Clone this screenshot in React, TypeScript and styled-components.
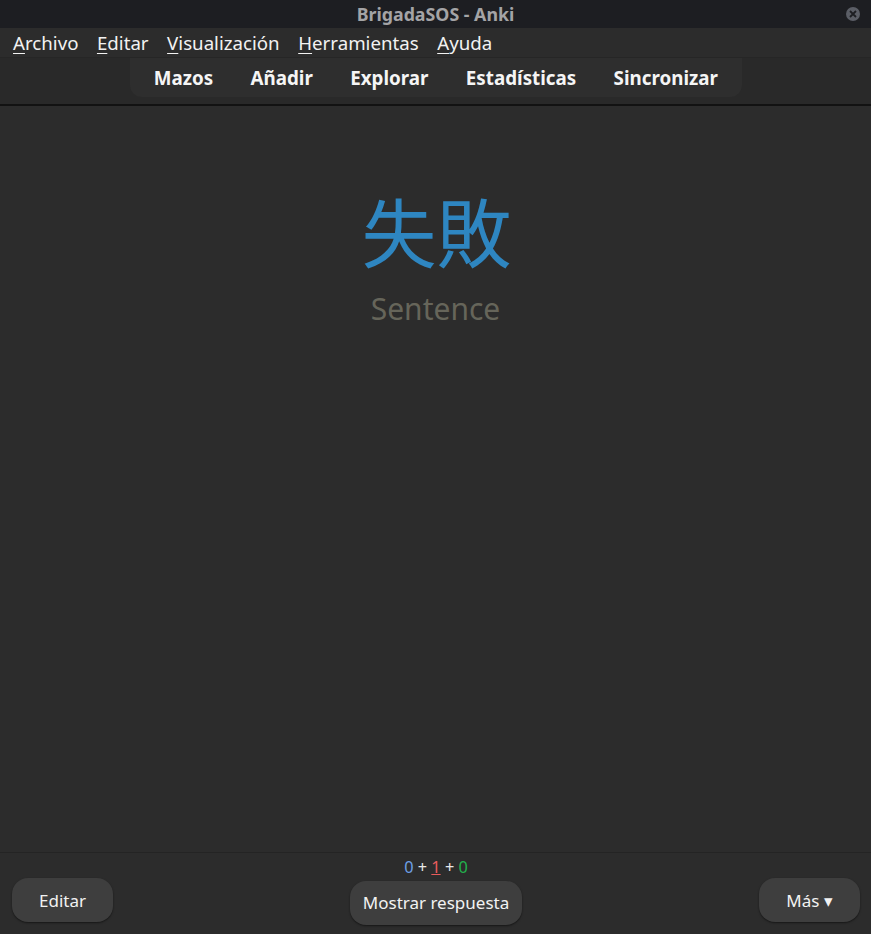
import styled, { createGlobalStyle } from "styled-components";

const GlobalStyle = createGlobalStyle`
  html, body {
    margin: 0;
    padding: 0;
    background: #2c2c2c;
    font-family: "Noto Sans", "Open Sans", sans-serif;
  }
`;

const Window = styled.div`
  width: 871px;
  height: 934px;
  display: flex;
  flex-direction: column;
  background: #2c2c2c;
  overflow: hidden;
`;

const TitleBar = styled.div`
  height: 28px;
  flex: 0 0 28px;
  background: #1d1e22;
  display: flex;
  align-items: center;
  justify-content: center;
  position: relative;
  color: #a4a4a6;
  font-weight: 700;
  font-size: 17.8px;
`;

const CloseBtn = styled.div`
  position: absolute;
  right: 11px;
  top: 7px;
  width: 14px;
  height: 14px;
  border-radius: 50%;
  background: #5b5e66;
  display: flex;
  align-items: center;
  justify-content: center;
`;

const MenuBar = styled.div`
  height: 29px;
  flex: 0 0 29px;
  display: flex;
  align-items: center;
  gap: 18.5px;
  padding-left: 13px;
  background: #2c2c2c;
  color: #f2f2f2;
  font-size: 18.7px;
  border-bottom: 1px solid #262626;
`;

const MenuItem = styled.span`
  line-height: 29px;
  u {
    text-decoration-thickness: 1px;
    text-underline-offset: 3px;
  }
`;

const ToolbarArea = styled.div`
  height: 46px;
  flex: 0 0 46px;
  display: flex;
  justify-content: center;
  align-items: flex-start;
  background: #292929;
  border-bottom: 2px solid #121212;
`;

const Toolbar = styled.nav`
  display: flex;
  padding: 0 5px 0 5px;
  height: 39px;
  align-items: center;
  width: 612px;
  box-sizing: border-box;
  background: #2e2e2e;
  border-radius: 0 0 12px 12px;
  margin-left: 1px;
`;

const ToolLink = styled.a`
  color: #f5f5f5;
  font-weight: 700;
  font-size: 18.8px;
  padding: 0 18.7px;
  text-decoration: none;
`;

const Card = styled.main`
  flex: 1;
  display: flex;
  flex-direction: column;
  align-items: center;
  padding-top: 74px;
`;

const Kanji = styled.div`
  font-family: "Noto Sans CJK JP", "Noto Sans", sans-serif;
  font-size: 75px;
  color: #2e86c1;
  line-height: 100px;
  margin-left: 2px;
`;

const Hint = styled.div`
  font-size: 30px;
  color: #66655a;
  line-height: 40px;
  margin-top: 9px;
`;

const BottomBar = styled.footer`
  height: 81px;
  flex: 0 0 81px;
  border-top: 1px solid #242424;
  display: grid;
  grid-template-columns: 1fr auto 1fr;
  align-items: start;
  padding: 0 11px 0 12px;
  background: #2c2c2c;
`;

const Side = styled.div<{ $align: "start" | "end" }>`
  display: flex;
  justify-content: flex-${(p) => p.$align};
  padding-top: 25px;
`;

const Center = styled.div`
  display: flex;
  flex-direction: column;
  align-items: center;
`;

const Counts = styled.div`
  font-size: 16.3px;
  line-height: 24px;
  height: 26px;
  color: #e8e8e8;
  margin-top: 2px;
`;

const Count = styled.span<{ $c: string; $u?: boolean }>`
  color: ${(p) => p.$c};
  text-decoration: ${(p) => (p.$u ? "underline" : "none")};
`;

const Button = styled.button<{ $w: number }>`
  width: ${(p) => p.$w}px;
  height: 44px;
  border: none;
  border-radius: 16px;
  background: #3e3e3e;
  color: #f2f2f2;
  font-family: "Noto Sans", sans-serif;
  font-size: 17px;
  box-shadow: 0 1px 2px rgba(0, 0, 0, 0.5);
  cursor: pointer;
  padding-bottom: ${(p) => (p.$w > 150 ? 2 : 0)}px;
`;

export default function App() {
  return (
    <Window>
      <GlobalStyle />
      <TitleBar>
        BrigadaSOS - Anki
        <CloseBtn>
          <svg width="8" height="8" viewBox="0 0 8 8">
            <path d="M1 1 L7 7 M7 1 L1 7" stroke="#1d1e22" strokeWidth="1.8" />
          </svg>
        </CloseBtn>
      </TitleBar>
      <MenuBar>
        <MenuItem><u>A</u>rchivo</MenuItem>
        <MenuItem><u>E</u>ditar</MenuItem>
        <MenuItem><u>V</u>isualización</MenuItem>
        <MenuItem><u>H</u>erramientas</MenuItem>
        <MenuItem><u>A</u>yuda</MenuItem>
      </MenuBar>
      <ToolbarArea>
        <Toolbar>
          <ToolLink href="#">Mazos</ToolLink>
          <ToolLink href="#">Añadir</ToolLink>
          <ToolLink href="#">Explorar</ToolLink>
          <ToolLink href="#">Estadísticas</ToolLink>
          <ToolLink href="#">Sincronizar</ToolLink>
        </Toolbar>
      </ToolbarArea>
      <Card>
        <Kanji>失敗</Kanji>
        <Hint>Sentence</Hint>
      </Card>
      <BottomBar>
        <Side $align="start">
          <Button $w={101}>Editar</Button>
        </Side>
        <Center>
          <Counts>
            <Count $c="#6ea0e6">0</Count> + <Count $c="#e85c5c" $u>1</Count> +{" "}
            <Count $c="#22b14c">0</Count>
          </Counts>
          <Button $w={172}>Mostrar respuesta</Button>
        </Center>
        <Side $align="end">
          <Button $w={101}>Más ▾</Button>
        </Side>
      </BottomBar>
    </Window>
  );
}
